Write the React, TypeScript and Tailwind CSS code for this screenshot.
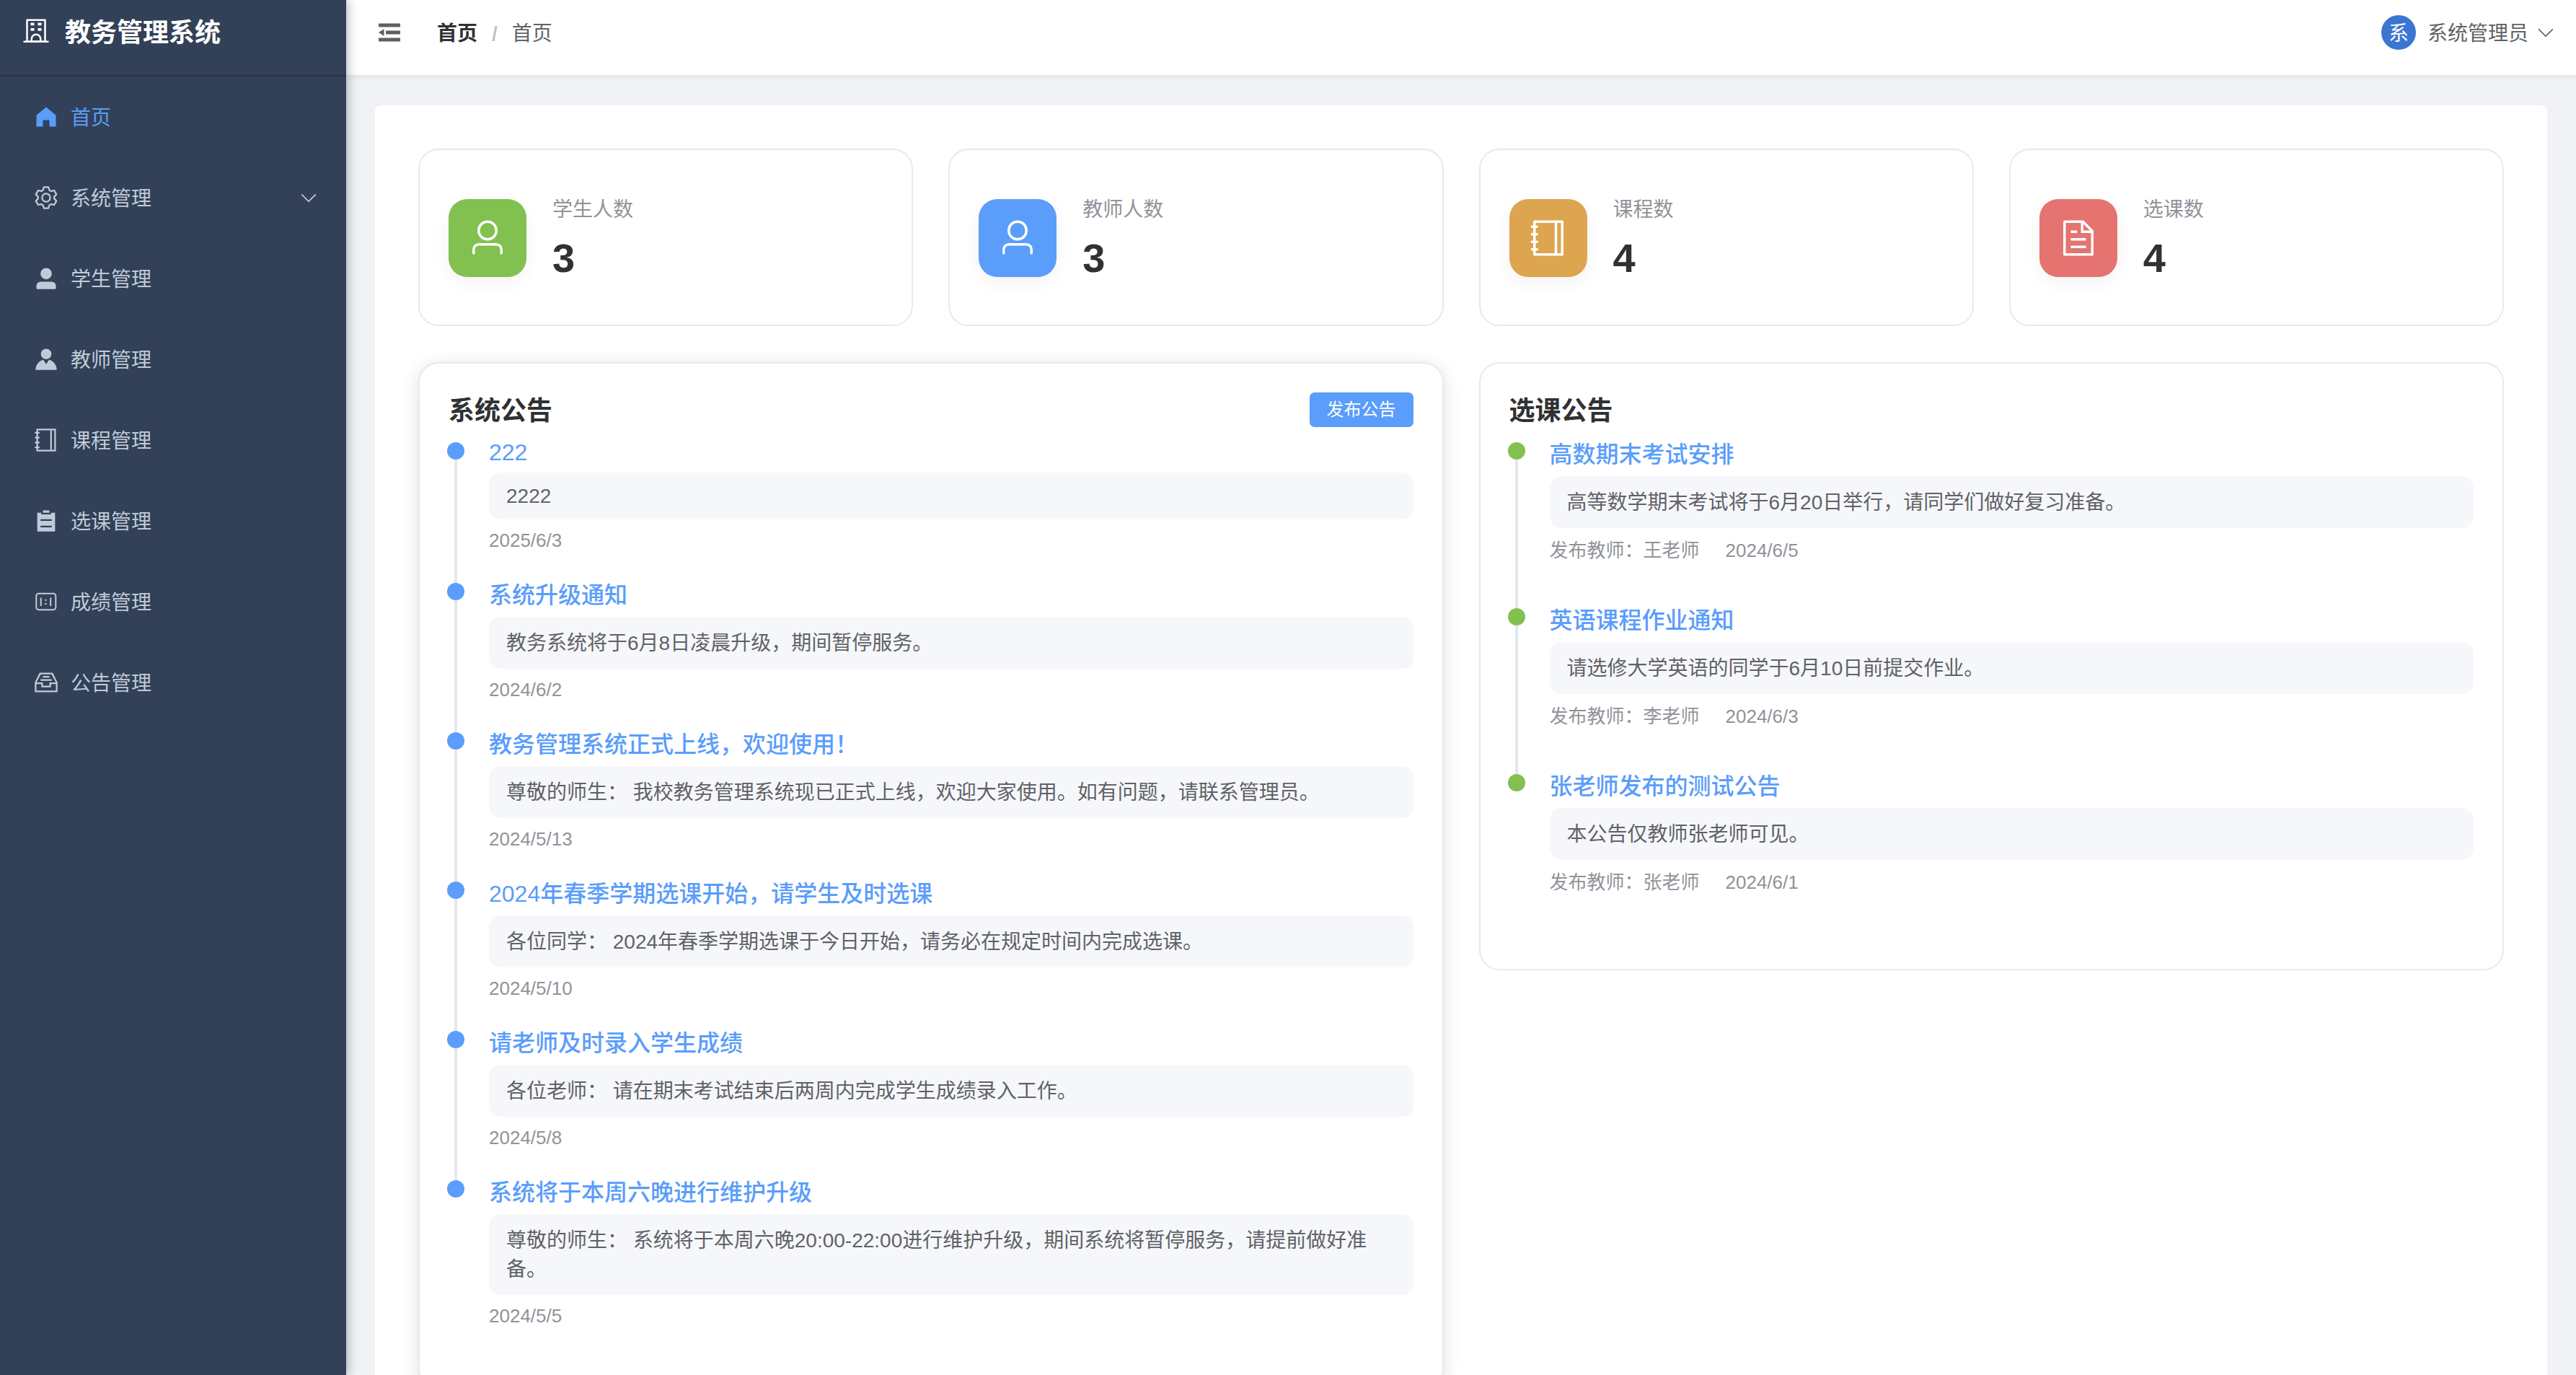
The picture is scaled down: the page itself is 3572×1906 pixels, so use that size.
import React from 'react';

type IconProps = { d: string | string[]; className?: string };

function Ep({ d, className }: IconProps) {
  const paths = Array.isArray(d) ? d : [d];
  return (
    <svg viewBox="0 0 1024 1024" fill="currentColor" className={className}>
      {paths.map((p, i) => (
        <path key={i} d={p} />
      ))}
    </svg>
  );
}

const icons = {
  school: [
    'M224 128v704h576V128zm-32-64h640a32 32 0 0 1 32 32v768a32 32 0 0 1-32 32H192a32 32 0 0 1-32-32V96a32 32 0 0 1 32-32',
    'M64 832h896v64H64zm256-640h128v96H320z',
    'M384 832h256v-64a128 128 0 1 0-256 0zm128-256a192 192 0 0 1 192 192v128H320V768a192 192 0 0 1 192-192M320 384h128v96H320zm256-192h128v96H576zm0 192h128v96H576z',
  ],
  fold: 'M896 192H128v128h768zm0 256H384v128h512zm0 256H128v128h768zM320 384 128 512l192 128z',
  home: 'M512 128 128 447.936V896h255.936V640H640v256h255.936V447.936z',
  setting:
    'M600.704 64a32 32 0 0 1 30.464 22.208l35.2 109.376c14.784 7.232 28.928 15.36 42.432 24.512l112.384-24.192a32 32 0 0 1 34.432 15.36L944.32 364.8a32 32 0 0 1-4.032 37.504l-77.12 85.12a357.12 357.12 0 0 1 0 49.024l77.12 85.248a32 32 0 0 1 4.032 37.504l-88.704 153.6a32 32 0 0 1-34.432 15.296L708.8 803.904c-13.44 9.088-27.648 17.28-42.368 24.512l-35.264 109.376A32 32 0 0 1 600.704 960H423.296a32 32 0 0 1-30.464-22.208L357.696 828.48a351.616 351.616 0 0 1-42.56-24.64l-112.32 24.256a32 32 0 0 1-34.432-15.36L79.68 659.2a32 32 0 0 1 4.032-37.504l77.12-85.248a357.12 357.12 0 0 1 0-48.896l-77.12-85.248A32 32 0 0 1 79.68 364.8l88.704-153.6a32 32 0 0 1 34.432-15.296l112.32 24.256c13.568-9.152 27.776-17.408 42.56-24.64l35.2-109.312A32 32 0 0 1 423.232 64H600.64zm-23.424 64H446.72l-36.352 113.088-24.512 11.968a294.113 294.113 0 0 0-34.816 20.096l-22.656 15.36-116.224-25.088-65.28 113.152 79.68 88.192-1.92 27.136a293.12 293.12 0 0 0 0 40.192l1.92 27.136-79.808 88.192 65.344 113.152 116.224-25.024 22.656 15.296a294.113 294.113 0 0 0 34.816 20.096l24.512 11.968L446.72 896h130.688l36.48-113.152 24.448-11.904a288.282 288.282 0 0 0 34.752-20.096l22.592-15.296 116.288 25.024 65.28-113.152-79.744-88.192 1.92-27.136a293.12 293.12 0 0 0 0-40.256l-1.92-27.136 79.808-88.128-65.344-113.152-116.288 24.96-22.592-15.232a287.616 287.616 0 0 0-34.752-20.096l-24.448-11.904L577.344 128zM512 320a192 192 0 1 1 0 384 192 192 0 0 1 0-384m0 64a128 128 0 1 0 0 256 128 128 0 0 0 0-256',
  userFilled:
    'M288 320a224 224 0 1 0 448 0 224 224 0 1 0-448 0m544 608H160a32 32 0 0 1-32-32v-96a160 160 0 0 1 160-160h448a160 160 0 0 1 160 160v96a32 32 0 0 1-32 32z',
  avatar:
    'M628.736 528.896A416 416 0 0 1 928 928H96a415.872 415.872 0 0 1 299.264-399.104L512 704l116.736-175.104zM720 304a208 208 0 1 1-416 0 208 208 0 0 1 416 0',
  notebook: [
    'M192 128v768h640V128zm-32-64h704a32 32 0 0 1 32 32v832a32 32 0 0 1-32 32H160a32 32 0 0 1-32-32V96a32 32 0 0 1 32-32',
    'M672 128h64v768h-64zM96 192h128q32 0 32 32t-32 32H96q-32 0-32-32t32-32m0 192h128q32 0 32 32t-32 32H96q-32 0-32-32t32-32m0 192h128q32 0 32 32t-32 32H96q-32 0-32-32t32-32m0 192h128q32 0 32 32t-32 32H96q-32 0-32-32t32-32',
  ],
  list: 'M704 192h160v736H160V192h160v64h384zM288 512h448v-64H288zm0 256h448v-64H288zm96-576V96h256v96z',
  messageBox:
    'M288 384h448v64H288zm96-128h256v64H384zM131.456 512H384v128h256V512h252.544L721.856 192H302.144zM896 576H704v128H320V576H128v256h768zM275.776 128h472.448a32 32 0 0 1 28.608 17.664l179.84 359.552A32 32 0 0 1 960 519.552V864a32 32 0 0 1-32 32H96a32 32 0 0 1-32-32V519.552a32 32 0 0 1 3.392-14.336l179.776-359.552A32 32 0 0 1 275.776 128z',
  user: 'M512 512a192 192 0 1 0 0-384 192 192 0 0 0 0 384m0 64a256 256 0 1 1 0-512 256 256 0 0 1 0 512m320 320v-96a96 96 0 0 0-96-96H288a96 96 0 0 0-96 96v96a32 32 0 1 1-64 0v-96a160 160 0 0 1 160-160h448a160 160 0 0 1 160 160v96a32 32 0 1 1-64 0',
  document:
    'M832 384H576V128H192v768h640zm-26.496-64L640 154.496V320zM160 64h480l256 256v608a32 32 0 0 1-32 32H160a32 32 0 0 1-32-32V96a32 32 0 0 1 32-32m160 448h384v64H320zm0-192h160v64H320zm0 384h384v64H320z',
  arrowDown:
    'M831.872 340.864 512 660.672 192.128 340.864a30.592 30.592 0 0 0-42.752.768 29.76 29.76 0 0 0-.832 42.048l341.44 341.44a32 32 0 0 0 45.12 0l341.44-341.44a29.76 29.76 0 0 0-.832-42.048 30.592 30.592 0 0 0-42.752-.768',
};

// no matching icon in the set, drawn by hand
function GradeIcon() {
  return (
    <svg viewBox="0 0 36 36" fill="none" stroke="currentColor" strokeWidth="2" className="w-[36px] h-[36px]">
      <rect x="4.3" y="6.7" width="27" height="22.5" rx="3.5" />
      <path d="M10.7 12.5v11.5M24.2 12.5v11.5" />
      <path d="M17.4 14.8v2M17.4 20v2" strokeWidth="2.2" />
    </svg>
  );
}

const menu = [
  { label: '首页', icon: icons.home, active: true },
  { label: '系统管理', icon: icons.setting, arrow: true },
  { label: '学生管理', icon: icons.userFilled },
  { label: '教师管理', icon: icons.avatar },
  { label: '课程管理', icon: icons.notebook },
  { label: '选课管理', icon: icons.list },
  { label: '成绩管理', icon: null },
  { label: '公告管理', icon: icons.messageBox },
];

const stats = [
  { label: '学生人数', value: 3, icon: icons.user, bg: 'bg-[#82c050]' },
  { label: '教师人数', value: 3, icon: icons.user, bg: 'bg-[#5a9dfb]' },
  { label: '课程数', value: 4, icon: icons.notebook, bg: 'bg-[#dda550]' },
  { label: '选课数', value: 4, icon: icons.document, bg: 'bg-[#e57370]' },
];

const systemNotices = [
  { title: '222', content: '2222', date: '2025/6/3', latin: true },
  { title: '系统升级通知', content: '教务系统将于6月8日凌晨升级，期间暂停服务。', date: '2024/6/2' },
  {
    title: '教务管理系统正式上线，欢迎使用！',
    content: '尊敬的师生： 我校教务管理系统现已正式上线，欢迎大家使用。如有问题，请联系管理员。',
    date: '2024/5/13',
  },
  {
    title: '2024年春季学期选课开始，请学生及时选课',
    content: '各位同学： 2024年春季学期选课于今日开始，请务必在规定时间内完成选课。',
    date: '2024/5/10',
  },
  {
    title: '请老师及时录入学生成绩',
    content: '各位老师： 请在期末考试结束后两周内完成学生成绩录入工作。',
    date: '2024/5/8',
  },
  {
    title: '系统将于本周六晚进行维护升级',
    content: '尊敬的师生： 系统将于本周六晚20:00-22:00进行维护升级，期间系统将暂停服务，请提前做好准备。',
    date: '2024/5/5',
  },
];

const courseNotices = [
  {
    title: '高数期末考试安排',
    content: '高等数学期末考试将于6月20日举行，请同学们做好复习准备。',
    teacher: '王老师',
    date: '2024/6/5',
  },
  {
    title: '英语课程作业通知',
    content: '请选修大学英语的同学于6月10日前提交作业。',
    teacher: '李老师',
    date: '2024/6/3',
  },
  {
    title: '张老师发布的测试公告',
    content: '本公告仅教师张老师可见。',
    teacher: '张老师',
    date: '2024/6/1',
  },
];

function Sidebar() {
  return (
    <aside className="w-[480px] shrink-0 bg-[#324157] z-20 shadow-[4px_0_12px_rgba(0,21,41,0.25)]">
      <div className="h-[106px] pb-[16px] pl-[30px] flex items-center gap-[20px] border-b-2 border-[#263445] text-white">
        <Ep d={icons.school} className="w-[40px] h-[40px]" />
        <span className="pt-[3px] text-[36px] leading-[48px] font-semibold">教务管理系统</span>
      </div>
      <nav>
        {menu.map((item) => (
          <div
            key={item.label}
            className={`h-[112px] pl-[46px] pr-[38px] flex items-center gap-[16px] text-[28px] ${
              item.active ? 'text-[#5a9dfb]' : 'text-[#bfcbd9]'
            }`}
          >
            {item.icon ? <Ep d={item.icon} className="w-[36px] h-[36px]" /> : <GradeIcon />}
            <span className="flex-1 pt-[3px]">{item.label}</span>
            {item.arrow && <Ep d={icons.arrowDown} className="w-[28px] h-[28px]" />}
          </div>
        ))}
      </nav>
    </aside>
  );
}

function Header() {
  return (
    <header className="h-[104px] shrink-0 pb-[14px] pl-[40px] pr-[28px] bg-white flex items-center z-10 shadow-[0_2px_8px_rgba(0,21,41,0.08)]">
      <Ep d={icons.fold} className="w-[40px] h-[40px] text-[#5f6064]" />
      <div className="ml-[46px] pt-[3px] flex items-center text-[28px]">
        <span className="font-semibold text-[#303133]">首页</span>
        <span className="mx-[20px] text-[#c0c4cc] font-bold">/</span>
        <span className="text-[#606266]">首页</span>
      </div>
      <div className="ml-auto flex items-center text-[#606266]">
        <div className="w-[48px] h-[48px] pt-[3px] rounded-full bg-[#3a76d2] text-white text-[28px] flex items-center justify-center">
          系
        </div>
        <span className="ml-[16px] pt-[3px] text-[28px]">系统管理员</span>
        <Ep d={icons.arrowDown} className="ml-[10px] w-[28px] h-[28px]" />
      </div>
    </header>
  );
}

function StatCard({ label, value, icon, bg }: (typeof stats)[number]) {
  return (
    <div className="h-[246px] border-2 border-[#e8e9ee] rounded-[28px] pl-[40px] pt-[68px] flex items-start">
      <div
        className={`w-[108px] h-[108px] rounded-[26px] text-white flex items-center justify-center shadow-[0_8px_24px_rgba(0,0,0,0.05)] ${bg}`}
      >
        <Ep d={icon} className="w-[56px] h-[56px]" />
      </div>
      <div className="ml-[36px]">
        <div className="text-[28px] leading-[30px] text-[#909399]">{label}</div>
        <div className="mt-[26px] text-[56px] leading-[52px] font-bold text-[#303133]">{value}</div>
      </div>
    </div>
  );
}

type RowProps = {
  title: string;
  content: string;
  dot: string;
  last: boolean;
  latin?: boolean;
  metaClass: string;
  meta: React.ReactNode;
};

function TimelineRow({ title, content, dot, last, latin, metaClass, meta }: RowProps) {
  return (
    <div className="flex">
      <div className="w-[24px] shrink-0 ml-[-2px] flex flex-col items-center">
        <div className={`w-[24px] h-[24px] rounded-full ${dot}`} />
        {!last && <div className="w-[4px] flex-1 bg-[#e4e7ed]" />}
      </div>
      <div className="ml-[34px] flex-1 min-w-0">
        <div
          className={`text-[32px] font-medium text-[#5a9dfb] ${latin ? 'leading-[28px] mb-[14px]' : 'leading-[34px] mb-[13px]'}`}
        >
          {title}
        </div>
        <div
          className={`bg-[#f6f7fb] rounded-[16px] px-[24px] text-[28px] text-[#606266] ${
            latin ? 'leading-[33px] py-[16px]' : 'leading-[40px] pt-[17px] pb-[15px]'
          }`}
        >
          {content}
        </div>
        <div className={`text-[26px] leading-[34px] text-[#909399] ${metaClass}`}>{meta}</div>
      </div>
    </div>
  );
}

export default function App() {
  return (
    <div className="h-[1906px] flex overflow-hidden bg-[#f0f2f5] font-['Liberation_Sans','Noto_Sans_CJK_SC',sans-serif]">
      <Sidebar />
      <div className="flex-1 min-w-0 flex flex-col">
        <Header />
        <main className="flex-1 min-h-0 overflow-hidden px-[40px] pt-[42px]">
          <div className="bg-white rounded-[8px] p-[60px]">
            <div className="grid grid-cols-4 gap-[49px]">
              {stats.map((s) => (
                <StatCard key={s.label} {...s} />
              ))}
            </div>

            <div className="mt-[50px] grid grid-cols-2 gap-[49px] items-start">
              <section className="border-2 border-[#e8e9ee] rounded-[28px] p-[40px] shadow-[0_4px_24px_rgba(0,0,0,0.12)]">
                <div className="h-[48px] mb-[21px] flex items-center justify-between">
                  <h2 className="pt-[3px] text-[36px] font-semibold text-[#303133]">系统公告</h2>
                  <button className="w-[144px] h-[48px] rounded-[7px] bg-[#5a9dfb] text-white text-[24px]">
                    发布公告
                  </button>
                </div>
                {systemNotices.map((n, i) => (
                  <TimelineRow
                    key={n.date}
                    title={n.title}
                    content={n.content}
                    latin={n.latin}
                    dot="bg-[#5a9dfb]"
                    last={i === systemNotices.length - 1}
                    metaClass="mt-[12px] pb-[42px]"
                    meta={n.date}
                  />
                ))}
              </section>

              <section className="border-2 border-[#e8e9ee] rounded-[28px] p-[40px]">
                <div className="h-[48px] mb-[21px] flex items-center">
                  <h2 className="pt-[3px] text-[36px] font-semibold text-[#303133]">选课公告</h2>
                </div>
                {courseNotices.map((n, i) => (
                  <TimelineRow
                    key={n.date}
                    title={n.title}
                    content={n.content}
                    dot="bg-[#82c050]"
                    last={i === courseNotices.length - 1}
                    metaClass="mt-[14px] pb-[63px]"
                    meta={
                      <>
                        <span className="mr-[36px]">发布教师：{n.teacher}</span>
                        <span>{n.date}</span>
                      </>
                    }
                  />
                ))}
              </section>
            </div>
          </div>
        </main>
      </div>
    </div>
  );
}
